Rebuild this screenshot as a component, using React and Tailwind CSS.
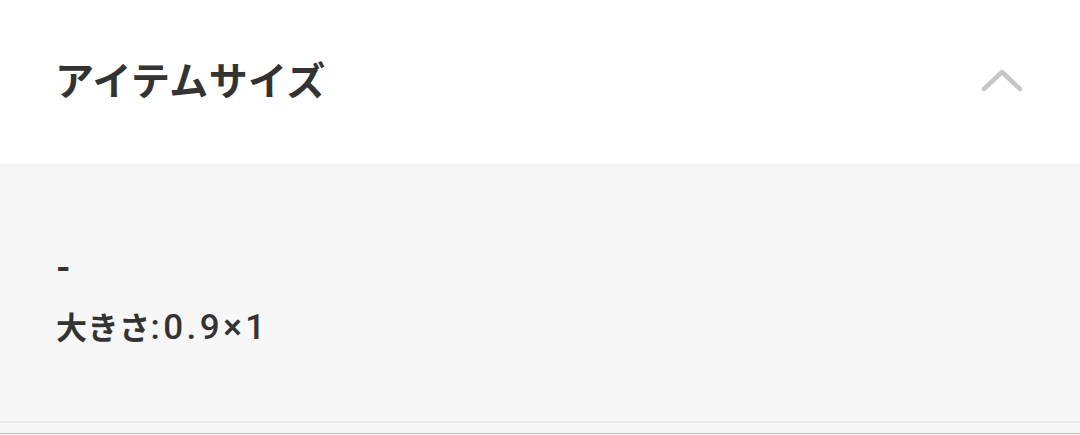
import React from 'react';

const font = { fontFamily: '"Noto Sans CJK JP", "Noto Sans", sans-serif' };
const latin = { fontFamily: 'Roboto, "Noto Sans CJK JP", sans-serif' };

const ItemSize = () => {
    return (
        <div className="w-[1080px] h-[435px] bg-white overflow-hidden" style={font}>
            <div className="h-[164px] flex items-center justify-between pl-[55px] pr-[56px] pb-[7px]">
                <h2 className="text-[39px] font-bold text-[#333] tracking-[0.4px]">アイテムサイズ</h2>
                <svg width="44" height="28" viewBox="0 0 44 28" fill="none" className="mt-[2px]">
                    <path d="M4 23 L22 6 L40 23" stroke="#c6c6c6" strokeWidth="4.5" strokeLinecap="round" strokeLinejoin="round" />
                </svg>
            </div>
            <div className="h-[257px] bg-[#f7f7f7] border-t-[3px] border-[#f3f3f3] pl-[56px] pt-[81px] text-[#333]">
                <p className="text-[37px] leading-[40px] font-bold" style={latin}>-</p>
                <p className="mt-[18px] text-[31px] leading-[40px] font-semibold tracking-[0.5px]">
                    大きさ<span className="text-[35px] font-medium tracking-[3.5px]" style={latin}>:0.9×1</span>
                </p>
            </div>
            <div className="h-[2px] bg-[#ebebeb]" />
            <div className="h-[10px] bg-[#f7f7f7]" />
            <div className="h-[1px] bg-[#bfbfbf]" />
        </div>
    );
}

export default function App() {
    return <ItemSize />;
}
